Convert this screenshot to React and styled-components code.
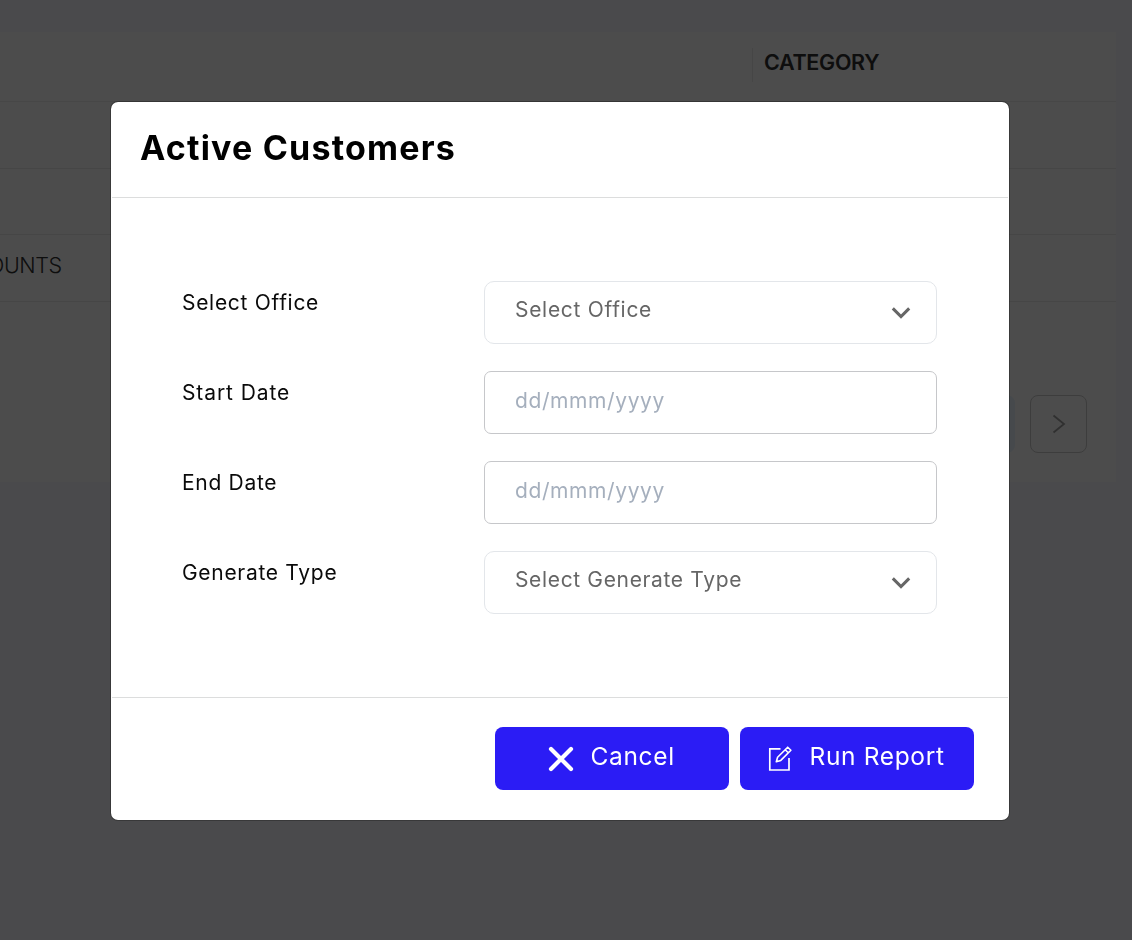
import styled, { createGlobalStyle } from "styled-components";

const GlobalStyle = createGlobalStyle`
  *,
  *::before,
  *::after {
    box-sizing: border-box;
  }

  body {
    margin: 0;
    overflow: hidden;
    background: #f9f9ff;
    font-family: Inter, "Liberation Sans", sans-serif;
    color: #000;
  }

  button,
  input {
    font-family: inherit;
  }
`;

const Page = styled.div`
  height: 940px;
  padding-top: 32px;
  overflow: hidden;
`;

const Panel = styled.div`
  width: 1116px;
  height: 450px;
  background: #fefefe;
`;

const TableHead = styled.div`
  display: grid;
  grid-template-columns: 752px 1fr;
  height: 70px;
  border-bottom: 1px solid #ededed;
`;

const HeadCell = styled.div`
  height: 34px;
  margin-top: 16px;
  padding-left: 11px;
  border-left: 1px solid #ebebeb;
  font-size: 21.5px;
  font-weight: 600;
  line-height: 29px;
  letter-spacing: -0.3px;
  color: #303030;
`;

const TableRow = styled.div`
  height: ${(props) => props.$height}px;
  border-bottom: 1px solid #eaeaea;
  font-size: 21.5px;
  font-weight: 300;
  line-height: 61px;
  letter-spacing: -0.4px;
  color: #303030;
`;

const Clipped = styled.div`
  margin-left: -12px;
`;

const Pagination = styled.div`
  display: flex;
  justify-content: flex-end;
  gap: 15px;
  padding: 93px 29px 0 0;
`;

const PageButton = styled.div`
  display: flex;
  align-items: center;
  justify-content: center;
  width: 57px;
  height: 58px;
  border: 1px solid ${(props) => (props.$active ? "#e9f5ff" : "#cdcdcd")};
  border-radius: 8px;
  background: ${(props) => (props.$active ? "#e9f5ff" : "transparent")};
`;

const Overlay = styled.div`
  position: fixed;
  inset: 0;
  display: flex;
  align-items: flex-start;
  padding: 101px 0 0 110px;
  background: rgba(0, 0, 0, 0.7);
`;

const Modal = styled.div`
  width: 900px;
  height: 720px;
  border: 1px solid rgba(0, 0, 0, 0.25);
  border-radius: 8px;
  background: #fff;
  background-clip: padding-box;
`;

const Header = styled.div`
  height: 96px;
  margin: 0 1px;
  padding-left: 28px;
  border-bottom: 1px solid #dcdddd;
`;

const Title = styled.h2`
  margin: 0;
  font-size: 34px;
  font-weight: 700;
  line-height: 91px;
  letter-spacing: 1.2px;
`;

const Body = styled.div`
  display: flex;
  flex-direction: column;
  gap: 27px;
  height: 499px;
  padding: 83px 72px 0 71px;
`;

const Field = styled.div`
  display: grid;
  grid-template-columns: 302px 1fr;
  height: 63px;
`;

const Label = styled.label`
  font-size: 21px;
  line-height: 43px;
  letter-spacing: ${(props) => props.$spacing}px;
  color: #0a0a0a;
`;

const Select = styled.div`
  display: flex;
  justify-content: space-between;
  padding: 0 25px 0 30px;
  border: 1px solid #e3e6ea;
  border-radius: 10px;
  font-size: 21px;
  line-height: 55px;
  letter-spacing: ${(props) => props.$spacing}px;
  color: #666;

  svg {
    margin-top: 24px;
  }
`;

const Input = styled.input`
  width: 100%;
  height: 63px;
  padding: 0 30px 5px;
  border: 1px solid #c6c7ca;
  border-radius: 7px;
  outline: none;
  background: #fff;
  font-size: 21px;

  &::placeholder {
    color: #a5afbd;
    font-weight: 400;
    letter-spacing: 0.6px;
    opacity: 1;
  }
`;

const Footer = styled.div`
  display: flex;
  justify-content: flex-end;
  gap: 11px;
  margin: 0 1px;
  padding: 29px 34px 0 0;
  border-top: 1px solid #dcdddd;
`;

const Button = styled.button`
  display: flex;
  width: 234px;
  height: 63px;
  padding: 0 0 0 ${(props) => props.$indent}px;
  border: none;
  border-radius: 8px;
  background: #2b1cf5;
  color: #fff;
  font-size: 24.5px;
  font-weight: 400;
  line-height: 58px;
  letter-spacing: ${(props) => props.$spacing}px;
  white-space: nowrap;

  svg {
    flex: none;
    margin: 18px 16.5px 0 0;
  }
`;

function ChevronDown() {
  return (
    <svg width="20" height="14" viewBox="0 0 20 14" fill="none">
      <path d="M1.8 2.4L10 10.6L18.2 2.4" stroke="#666" strokeWidth="3" />
    </svg>
  );
}

function ChevronRight() {
  return (
    <svg width="14" height="20" viewBox="0 0 14 20" fill="none">
      <path d="M1.5 1.5L12 10L1.5 18.5" stroke="#a0a0a0" strokeWidth="1.8" />
    </svg>
  );
}

function CloseIcon() {
  return (
    <svg width="26" height="28" viewBox="0 0 26 28" fill="none">
      <path
        d="M3 4L23 24M23 4L3 24"
        stroke="#fff"
        strokeWidth="4.2"
        strokeLinecap="round"
      />
    </svg>
  );
}

function EditIcon() {
  return (
    <svg width="26" height="28" viewBox="0 0 26 28" fill="none">
      <path
        d="M13.5 3.8H2.8V25H22V13"
        stroke="#fff"
        strokeWidth="1.7"
      />
      <path
        d="M9.3 16.8L10.6 12.3L20.7 2.2L23.9 5.3L13.8 15.4L9.3 16.8ZM18.2 4.8L21.3 7.8"
        stroke="#fff"
        strokeWidth="1.6"
        strokeLinejoin="round"
      />
    </svg>
  );
}

function App() {
  return (
    <>
      <GlobalStyle />
      <Page>
        <Panel>
          <TableHead>
            <div />
            <HeadCell>CATEGORY</HeadCell>
          </TableHead>
          <TableRow $height={67} />
          <TableRow $height={66} />
          <TableRow $height={67}>
            <Clipped>OUNTS</Clipped>
          </TableRow>
          <Pagination>
            <PageButton $active />
            <PageButton>
              <ChevronRight />
            </PageButton>
          </Pagination>
        </Panel>
      </Page>

      <Overlay>
        <Modal role="dialog">
          <Header>
            <Title>Active Customers</Title>
          </Header>
          <Body>
            <Field>
              <Label $spacing={0.7}>Select Office</Label>
              <Select $spacing={0.7}>
                Select Office
                <ChevronDown />
              </Select>
            </Field>
            <Field>
              <Label $spacing={0.9}>Start Date</Label>
              <Input placeholder="dd/mmm/yyyy" />
            </Field>
            <Field>
              <Label $spacing={0.7}>End Date</Label>
              <Input placeholder="dd/mmm/yyyy" />
            </Field>
            <Field>
              <Label $spacing={0.7}>Generate Type</Label>
              <Select $spacing={0.65}>
                Select Generate Type
                <ChevronDown />
              </Select>
            </Field>
          </Body>
          <Footer>
            <Button $indent={53} $spacing={0.65}>
              <CloseIcon />
              Cancel
            </Button>
            <Button $indent={27} $spacing={0.65}>
              <EditIcon />
              Run Report
            </Button>
          </Footer>
        </Modal>
      </Overlay>
    </>
  );
}

export default App;
